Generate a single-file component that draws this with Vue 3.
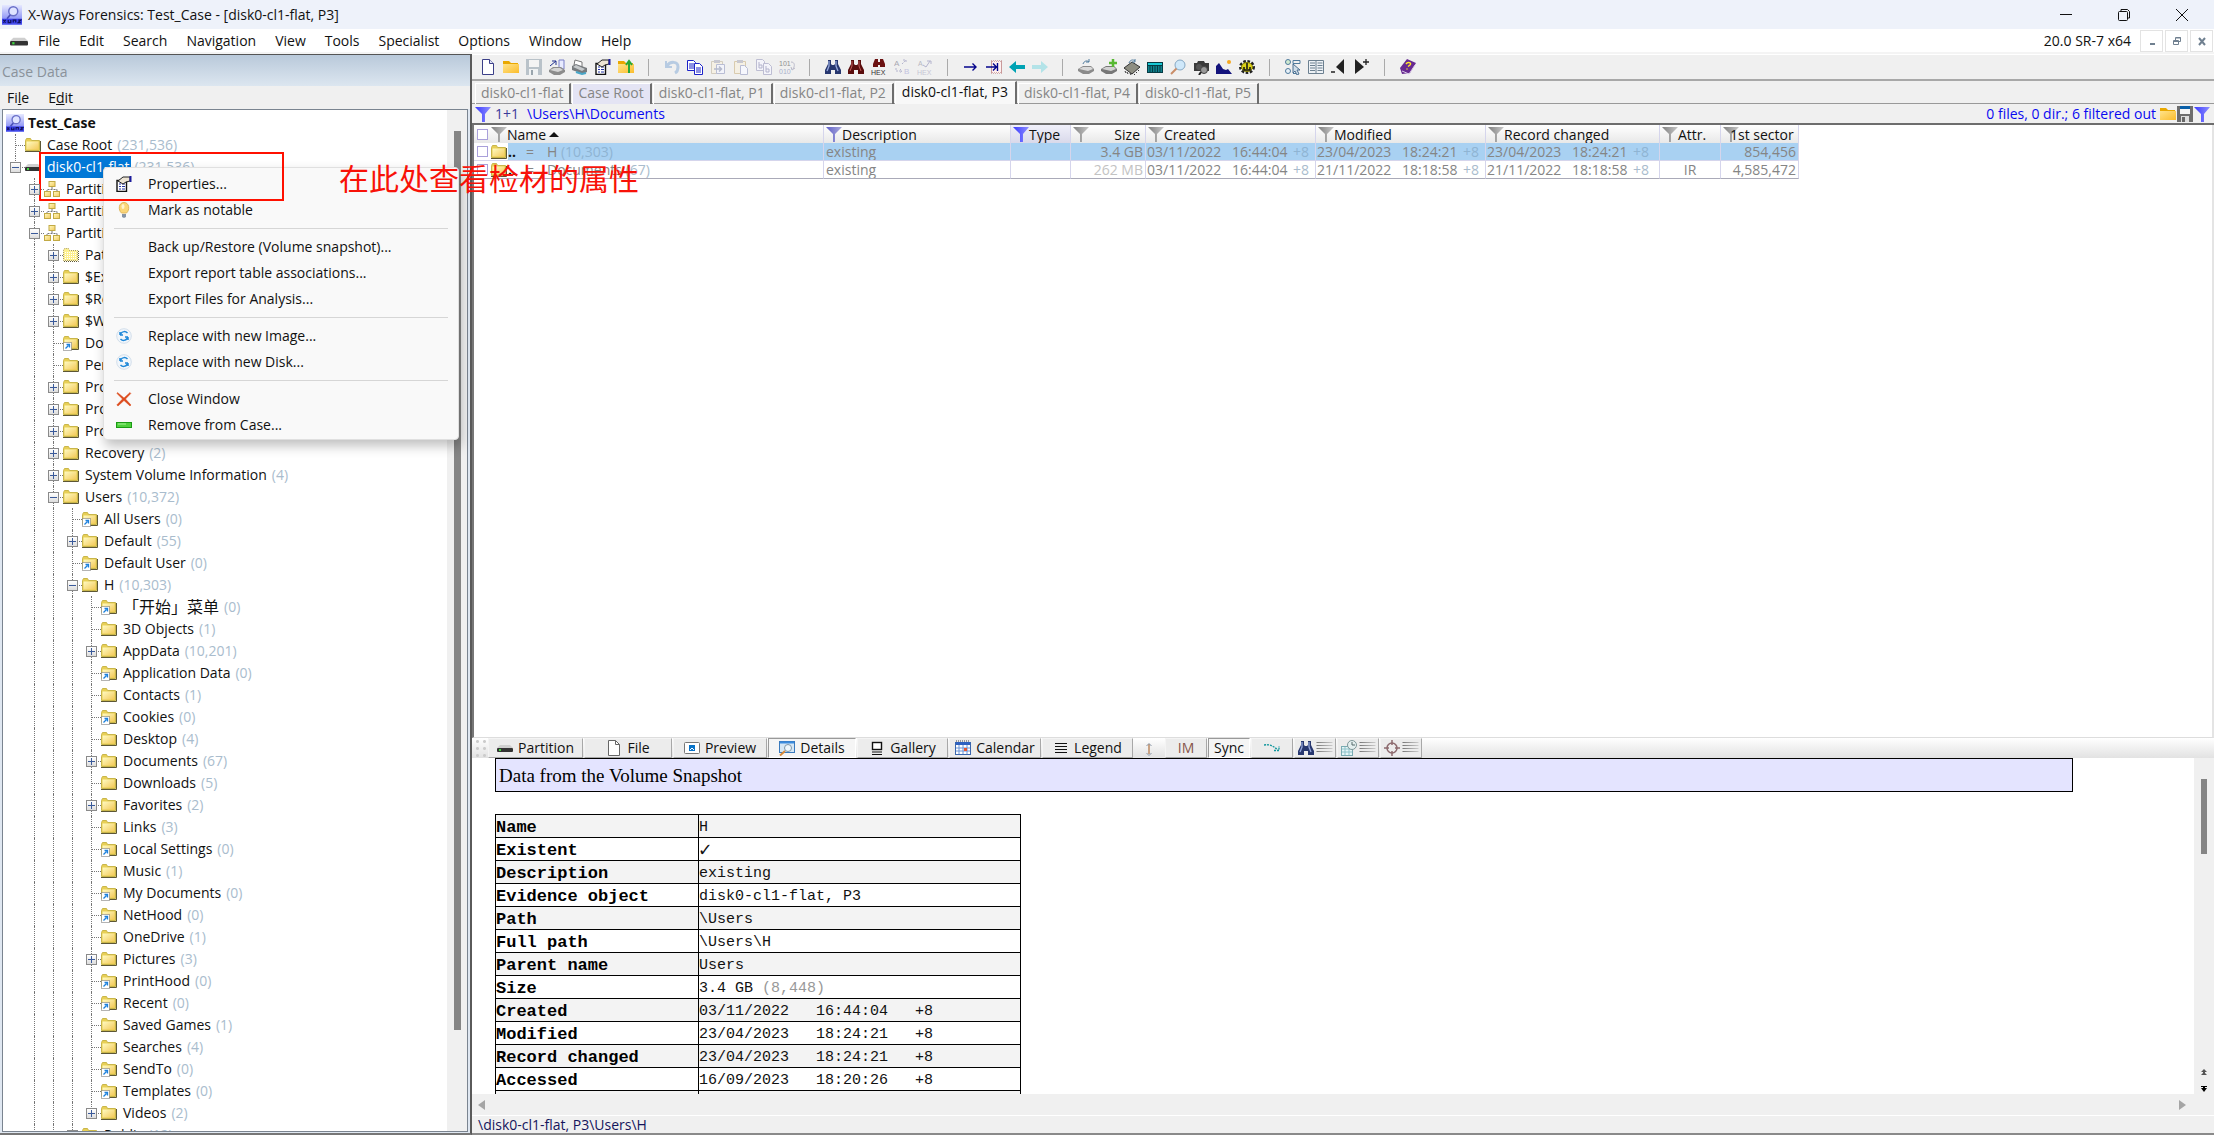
<script setup>
import { h, ref } from 'vue'

const icons = {
  app: '<rect width="16" height="16" fill="url(#gApp)"/><circle cx="9" cy="5" r="3.6" fill="#dfe3ff" stroke="#6a70c8" stroke-width="1.2"/><path d="M6.5 8L4 11" stroke="#4a50b8" stroke-width="1.4"/><rect y="11" width="16" height="4" fill="#3a40ea"/><path d="M1 12l2 2m0-2l-2 2M5 12v2h2v-2M9 14v-2h2v2M13 12h2l-2 2h2" stroke="#11125e" fill="none"/>',
  folder: '<path d="M.5 3.500l1-2h4l1 2h8v10H.5z" fill="#e8cf55" stroke="#c9b64a"/><path d="M1.500 4.500h12v8h-12z" fill="url(#gFold)"/><path d="M15.500 4v10.500H0" fill="none" stroke="#5d5735"/>',
  link: '<path d="M.5 3.500l1-2h4l1 2h8v10H.5z" fill="#e8cf55" stroke="#c9b64a"/><path d="M1.500 4.500h12v8h-12z" fill="url(#gFold)"/><path d="M15.500 4v10.500H8" fill="none" stroke="#5d5735"/><rect x="0.5" y="7.500" width="8" height="8" fill="#fff" stroke="#666" stroke-dasharray="1 1"/><path d="M2.500 13.500l3-3M3.500 9.500h3v3" stroke="#1c80dc" stroke-width="1.3" fill="none"/>',
  virtual: '<path d="M.5 3.500l1-2h4l1 2h8v10H.5z" fill="#fdf08e" stroke="#a99b55" stroke-dasharray="1 1"/><path d="M2 5.500h12M2 7.500h12M2 9.500h12M2 11.500h12" stroke="#fff" stroke-dasharray="1 1"/><path d="M15.500 4v10.500H0" fill="none" stroke="#5d5735" stroke-dasharray="1 1"/>',
  disk: '<path d="M3 5h10l3 3H0z" fill="#cfcfcf"/><rect y="8" width="16" height="4" rx="1" fill="#333"/><rect x="2" y="9" width="2" height="2" fill="#3fd63f"/>',
  part: '<path d="M8 6v3M3 11V8.500h10V11" stroke="#777" fill="none" stroke-dasharray="2 1"/><rect x="5" y=".5" width="6" height="5" fill="url(#gFold)" stroke="#c2aa45"/><rect x=".5" y="10.500" width="6" height="5" fill="url(#gFold)" stroke="#c2aa45"/><rect x="9.500" y="10.500" width="6" height="5" fill="url(#gFold)" stroke="#c2aa45"/>',
  new: '<path d="M2.500.5h7l4 4v11h-11z" fill="#fff" stroke="#3b3f88"/><path d="M9.500.5v4h4" fill="#dfe4f7" stroke="#3b3f88"/>',
  open: '<path d="M0 2h6l2 2h7v3H0z" fill="#e9a800"/><path d="M0 5h16v9H0z" fill="url(#gOpen)"/>',
  save: '<path d="M0 0h16v16H0z" fill="#b9c2c9"/><rect x="3" y="1" width="10" height="7" fill="#f4f4f4"/><rect x="3" y="10" width="9" height="6" fill="#f0f2f3"/><path d="M5 11h2v5H5z" fill="#9aa5ad"/>',
  floppy: '<path d="M0 0h16v16H0z" fill="#6d6d6d"/><rect x="3" y="0" width="10" height="3" fill="#0a5fa8"/><rect x="3" y="3" width="10" height="5" fill="#f4f4f4"/><rect x="4" y="10" width="8" height="6" fill="#ddd"/><path d="M5 11h3v5H5z" fill="#666"/>',
  scan: '<path d="M10 1h5v9h-5z" fill="#e8ebff" stroke="#7b80c8"/><path d="M1 7l6-5M3 2h4v4" stroke="#20308f" fill="none"/><path d="M0 11l4-3h8l4 3v2l-5 3H5l-5-3z" fill="#8c8c8c"/><path d="M1 11l4-2h6l3 2-5 2z" fill="#d5d5d5"/>',
  printer: '<path d="M3 1l7 2v5L2 6z" fill="#fff" stroke="#777"/><path d="M0 7l4-2 11 4v4l-4 2L0 11z" fill="#777b7e"/><path d="M1 8l3-2 9 4-3 2z" fill="#c6cacc"/><path d="M4 13l6 2 4-1" stroke="#49a7c9" stroke-width="2" fill="none"/>',
  props: '<path d="M1 4.500h9.500v11H1z" fill="#fff" stroke="#111" stroke-width="1.400"/><path d="M3 8h2m1 0h3M3 10.500h2m1 0h3M3 13h2m1 0h3" stroke="#2333a4"/><path d="M2 5l5-4h7v4l-4 1-3 2z" fill="#ece4d4" stroke="#222"/><path d="M13.500 0v6h2V0z" fill="#1c1c9c"/>',
  upfolder: '<path d="M0 2h6l2 2h7v3H0z" fill="#e9a800"/><path d="M0 5h16v9H0z" fill="url(#gOpen)"/><path d="M11 14V3M8 6l3-4 3 4" stroke="#27a838" stroke-width="2" fill="none"/>',
  undo: '<path d="M2 2v6h6" stroke="#b7cbe2" stroke-width="2" fill="none"/><path d="M3 7c3-5 11-5 11 1 0 3-1 5-3 6" stroke="#b7cbe2" stroke-width="3" fill="none"/>',
  copy: '<path d="M.5 1.500h6l2 2v8h-8z" fill="#fff" stroke="#1d22c9"/><path d="M2 5h5M2 7h5M2 9h5" stroke="#1d22c9"/><path d="M7.500 4.500h5l3 3v8h-8z" fill="#fff" stroke="#1d22c9"/><path d="M9 9h5M9 11h5M9 13h5" stroke="#1d22c9"/>',
  paste1: '<path d="M1.500 2.500h11v12h-11z" fill="#f5f0e4" stroke="#d3cdbf"/><path d="M4 1h6v3H4z" fill="#c8c8d0"/><path d="M6.500 5.500h8v9h-8z" fill="#f3f4fa" stroke="#b9bdd4"/><path d="M4 10h7M9 7.500l2.500 2.500L9 12.500" stroke="#b4b9cc" fill="none" stroke-width="1.500"/>',
  paste2: '<path d="M1.500 2.500h11v12h-11z" fill="#f5f0e4" stroke="#d9cbae"/><path d="M4 1h6v3H4z" fill="#c8c8d0"/><path d="M7.500 6.500h4l3 3v6h-7z" fill="#f6f7fd" stroke="#b9bdd4"/>',
  copyb: '<path d="M.5.5h6l2 2v9h-8z" fill="#f4f4fa" stroke="#bdbdd2"/><path d="M7.500 4.500h5l3 3v8h-8z" fill="#f4f4fa" stroke="#bdbdd2"/><path d="M3 3v6h3V6H3M10 7v6h3v-3h-3" stroke="#b3b3cc" fill="none"/>',
  bin: '<text x="0" y="7" font-size="7" font-family="Liberation Sans" fill="#8f8f8f">101</text><text x="0" y="15" font-size="7" font-family="Liberation Sans" fill="#aab0cc">010</text><path d="M12 3c4 0 4 4 2 7m-2-2l1 3 3-2" stroke="#b9b9c9" fill="none"/>',
  binoc: '<path d="M3 1h3v4l1 1h2l1-1V1h3v4l3 6v4h-6v-4H6v4H0v-4l3-6z" fill="#27376f"/><path d="M4 2v5l-2 5M11 2v5l2 5" stroke="#96a8dc" stroke-width="1.300" fill="none"/>',
  binocr: '<path d="M3 1h3v4l1 1h2l1-1V1h3v4l3 6v4h-6v-4H6v4H0v-4l3-6z" fill="#5a0c0c"/><path d="M4 2v5l-2 5M11 2v5l2 5" stroke="#c15a5a" fill="none"/>',
  binhex: '<path d="M4 0h3v3h2V0h3l2 5v3H9V6H7v2H2V5z" fill="#6c1212"/><text x="0" y="15.500" font-size="7" font-family="Liberation Sans" fill="#333">HEX</text>',
  ab: '<text x="0" y="7" font-size="8" font-family="Liberation Sans" fill="#a8a8b2">A</text><text x="10" y="15" font-size="8" font-family="Liberation Sans" fill="#c3c3e0">B</text><path d="M8 5l4-4M9 1h3v3M2 9v3h6m-2-2l2 2-2 2" stroke="#b4b4ce" fill="none" stroke-dasharray="2 1"/>',
  abhex: '<text x="1" y="7" font-size="7" font-family="Liberation Sans" fill="#b8b8c2">A</text><text x="0" y="15.500" font-size="7" font-family="Liberation Sans" fill="#c6c6d4">HEX</text><path d="M6 6l3 2 4-6m-3 0h4v3" stroke="#b4b4ce" fill="none"/>',
  goto: '<path d="M1 8h12M9.500 4.500L13 8l-3.500 3.500" stroke="#05058c" stroke-width="1.400" fill="none"/>',
  gotop: '<path d="M5.500 1.500l1 1 1-1 1 1 1-1 1 1 1-1 1 1 1-1 1 1 1-1v13l-1-1-1 1-1-1-1 1-1-1-1 1-1-1-1 1-1-1-1 1z" fill="#fff0f0" stroke="#c99a9a"/><path d="M0 8h10M7 4.500L10.500 8 7 11.500M11.500 4v8" stroke="#05058c" stroke-width="1.400" fill="none"/>',
  back: '<path d="M0 8l7-6v4h9v4H7v4z" fill="#00a3b4"/>',
  fwd: '<path d="M16 8L9 2v4H0v4h9v4z" fill="#b3e3e8"/>',
  drive: '<path d="M0 10l5-3h8l3 3v2l-5 3H5l-5-3z" fill="#8b8b8b"/><path d="M1 10l4-2h8l2 2-5 2z" fill="#d9d9d9"/><path d="M5 5c1-3 4-4 6-2M11 0v3H8" stroke="#4f7a9c" fill="none"/>',
  driveadd: '<path d="M0 10l5-3h8l3 3v2l-5 3H5l-5-3z" fill="#777"/><path d="M1 10l4-2h8l2 2-5 2z" fill="#d2d2d2"/><path d="M12 0v8M8 4h8" stroke="#57b832" stroke-width="2.500"/>',
  ram: '<path d="M0 9l8-6 8 5-8 7z" fill="#8e8e82" stroke="#333"/><path d="M1 12l1 2m1-1l1 2m2-1l1 2m3-1l1 1m1-3l1 1m1-3l1 1" stroke="#333"/><path d="M5 4c1-3 4-4 6-2M11 0v3H8" stroke="#4f7a9c" fill="none"/>',
  calc: '<path d="M0 3h16v11H0z" fill="#063b44"/><path d="M1 4h14v2H1z" fill="#18c8d4"/><path d="M1 8h14M1 10h14M1 12h14" stroke="#18c8d4" stroke-dasharray="1.500 1"/>',
  mag: '<circle cx="10" cy="6" r="5" fill="#cfe8fa" stroke="#86a8c4"/><path d="M6.500 9.500L1 15" stroke="#c98d68" stroke-width="2"/>',
  cam: '<path d="M1 4h3l1-2h6l1 2h4v8H1z" fill="#3b3b3b"/><circle cx="6" cy="8" r="3" fill="#555"/><circle cx="11" cy="11" r="3.500" fill="#999" stroke="#444"/><path d="M8 13l-2 3" stroke="#222" stroke-width="2"/>',
  pic: '<path d="M0 15V7l3-3 4 6 3 1 2-1 4 5z" fill="#13137c"/><circle cx="13" cy="3" r="2" fill="#f6a821"/>',
  gear: '<ellipse cx="8" cy="8" rx="6.500" ry="5.500" fill="none" stroke="#222" stroke-width="3" stroke-dasharray="2.500 1.500"/><ellipse cx="8" cy="8" rx="5.500" ry="4.500" fill="#ddd31a" stroke="#837c05"/><path d="M5 8v3h6V8M8 4v6" stroke="#111" stroke-width="1.500" fill="none"/>',
  opts: '<circle cx="3" cy="3" r="2.500" fill="#cfead0" stroke="#4f7a9c"/><circle cx="3" cy="12" r="2.500" fill="#e8f1f8" stroke="#4f7a9c"/><path d="M8 1.500h7v3H8zM8 14.500h3" fill="none" stroke="#4f7a9c"/><path d="M8 5l7 6h-3l2 4-2 1-2-4-2 2z" fill="#cfdde8" stroke="#4b6f90"/>',
  cols: '<path d="M.5 1.500h15v13H.5z" fill="#eef2f6" stroke="#6c8090"/><path d="M8 2v12M2 4h5M2 6.500h5M2 9h5M2 11.500h5M9.500 4h5M9.500 6.500h5M9.500 9h5M9.500 11.500h5" stroke="#6c8090"/>',
  prev: '<path d="M13 0v15L5 8z" fill="#222"/><path d="M0 13h4" stroke="#222" stroke-width="1.500"/>',
  next: '<path d="M1 0v15l9-7z" fill="#222"/><path d="M9 3h6M12 0v6" stroke="#222" stroke-width="1.300"/>',
  book: '<path d="M0 9L7 0l9 4-6 10-8 1z" fill="#672a91"/><path d="M2 12l7 3 6-9" stroke="#d9c8e6" fill="none"/><path d="M6 5c2-3 6-1 4 1L8 7.500M7 9.500v1" stroke="#ffe928" stroke-width="1.500" fill="none"/>',
  filter: '<path d="M0 1h16L10 8v8H7V8z" fill="url(#gBlue)"/>',
  filterg: '<path d="M0 1h16L9 8v8H7V8z" fill="url(#gGray)"/>',
  filterb: '<path d="M0 1h16L9 8v8H7V8z" fill="url(#gSlate)"/>',
  bulb: '<path d="M5.500 11C2 8 2.500.5 8 .5s6 7.500 2.500 10.500z" fill="#fbd678" stroke="#e0b75c"/><ellipse cx="7" cy="4.500" rx="1.500" ry="2.500" fill="#fff3cf"/><path d="M6 12h4v3l-2 1-2-1z" fill="#8694a6"/>',
  replace: '<circle cx="8" cy="8" r="7.300" fill="#f1f6fb" stroke="#d3dfeb"/><path d="M4 7V4m0 3h3M4.500 6c2-3 5-3 7-1M12 9v3m0-3H9m2.500 1c-2 3-5 3-7 1" stroke="#1d87d8" stroke-width="1.500" fill="none"/>',
  close: '<path d="M1.500 1.500L8 7l6-5.500.8 1L9.500 8l5.500 6-1 1-6-5.500L2 15l-1.200-1L6.500 8 1 2.500z" fill="#dc4a1c" stroke="#dc4a1c" stroke-width=".5"/>',
  remove: '<rect x=".5" y="5.500" width="15" height="5" fill="#4fd13c" stroke="#1a9a14"/><path d="M2 7h8" stroke="#a8f29a"/>',
  page: '<path d="M2.500.5h7l4 4v11h-11z" fill="#fff" stroke="#666"/><path d="M9.500.5v4h4" fill="none" stroke="#666"/>',
  preview: '<rect x=".5" y="2.500" width="15" height="11" rx="1" fill="#fff" stroke="#777"/><rect x="5" y="5" width="6" height="6" fill="#0873c9"/><path d="M6 10l2-2 2 2" stroke="#fff" fill="none"/>',
  details: '<rect x=".5" y="1.500" width="15" height="11" fill="#d5e7f5" stroke="#3a7abd"/><path d="M1 2.500h14" stroke="#3a8bdc" stroke-width="2"/><circle cx="9" cy="8" r="3.500" fill="#eef7fc" stroke="#7f96a7"/><path d="M6 11l-5 4.500" stroke="#d88a3a" stroke-width="2"/>',
  gallery: '<rect x="3.500" y="2.500" width="9" height="7" fill="#fff" stroke="#111" stroke-width="1.400"/><path d="M3 12h10M3 14.500h10" stroke="#111"/>',
  calendar: '<rect x=".5" y="2.500" width="15" height="12" fill="#fff" stroke="#3a66ad"/><path d="M1 3.500h14" stroke="#2f62c0" stroke-width="3"/><path d="M1 8h14M1 11h14M4 5v9M8 5v9M12 5v9" stroke="#6a94d6"/><rect x="9" y="8" width="3" height="3" fill="#e5542f"/><path d="M1 1h14" stroke="#444" stroke-dasharray="1 1"/>',
  legend: '<path d="M2 3.500h12M2 6.500h12M2 9.500h12M2 12.500h12" stroke="#111"/>',
  updown: '<path d="M8 4v10" stroke="#c9a283" stroke-width="2"/><path d="M5.500 6L8 3.500 10.500 6M5.500 13L8 15.500l2.500-2.500" stroke="#8a96a6" fill="none"/>',
  jump: '<path d="M0 5c6-1 9 1 14 5M10 10.500h5V6" stroke="#12979d" stroke-width="1.300" fill="none" stroke-dasharray="2 1"/>',
  lines: '<path d="M0 2.500h16M0 5.500h16M0 8.500h16M0 11.500h16" stroke="url(#gLine)"/>',
  calclock: '<rect x=".5" y="6.500" width="11" height="9" fill="#e5f5f7" stroke="#7aabb2"/><path d="M1 9h10M1 12h10M4 7v8M8 7v8" stroke="#8fc3ca"/><circle cx="11" cy="5" r="4.500" fill="#e4efef" stroke="#7e9698"/><path d="M11 2v3h3" stroke="#55696b" fill="none"/>',
  target: '<circle cx="8" cy="8" r="5" fill="none" stroke="#8c6a6e" stroke-width="1.500"/><path d="M8 0v5M8 11v5M0 8h5M11 8h5" stroke="#8c6a6e" stroke-width="1.500"/>'
}
const Icon = (p) => h('svg', { class: 'ico', viewBox: '0 0 16 16', 'aria-hidden': 'true', innerHTML: icons[p.name] })
Icon.props = ['name']

const menus = ['File', 'Edit', 'Search', 'Navigation', 'View', 'Tools', 'Specialist', 'Options', 'Window', 'Help']
const toolbar = [
  'new', 'open', 'save', 'scan', 'printer', 'props', 'upfolder', '|', 'undo', 'copy', 'paste1', 'paste2', 'copyb', 'bin', '|',
  'binoc', 'binocr', 'binhex', 'ab', 'abhex', '|', 'goto', 'gotop', 'back', 'fwd', '|', 'drive', 'driveadd', 'ram', 'calc',
  'mag', 'cam', 'pic', 'gear', '|', 'opts', 'cols', 'prev', 'next', '|', 'book'
]
const tabs = ['disk0-cl1-flat', 'Case Root', 'disk0-cl1-flat, P1', 'disk0-cl1-flat, P2', 'disk0-cl1-flat, P3', 'disk0-cl1-flat, P4', 'disk0-cl1-flat, P5']
const activeTab = ref(4)

// [level, expander, icon, label, count]
const tree = [
  [0, '', 'folder', 'Case Root', '231,536'],
  [0, '-', 'disk', 'disk0-cl1-flat', '231,536'],
  [1, '+', 'part', 'Partition 1', ''],
  [1, '+', 'part', 'Partition 2', ''],
  [1, '-', 'part', 'Partition 3', ''],
  [2, '+', 'virtual', 'Path unknown', ''],
  [2, '+', 'folder', '$Extend', ''],
  [2, '+', 'folder', '$Recycle.Bin', ''],
  [2, '+', 'folder', '$WinREAgent', ''],
  [2, '', 'link', 'Documents and Settings', ''],
  [2, '', 'folder', 'PerfLogs', ''],
  [2, '+', 'folder', 'Program Files', ''],
  [2, '+', 'folder', 'Program Files (x86)', ''],
  [2, '+', 'folder', 'ProgramData', ''],
  [2, '+', 'folder', 'Recovery', '2'],
  [2, '+', 'folder', 'System Volume Information', '4'],
  [2, '-', 'folder', 'Users', '10,372'],
  [3, '', 'link', 'All Users', '0'],
  [3, '+', 'folder', 'Default', '55'],
  [3, '', 'link', 'Default User', '0'],
  [3, '-', 'folder', 'H', '10,303'],
  [4, '', 'link', '「开始」菜单', '0'],
  [4, '', 'folder', '3D Objects', '1'],
  [4, '+', 'folder', 'AppData', '10,201'],
  [4, '', 'link', 'Application Data', '0'],
  [4, '', 'folder', 'Contacts', '1'],
  [4, '', 'link', 'Cookies', '0'],
  [4, '', 'folder', 'Desktop', '4'],
  [4, '+', 'folder', 'Documents', '67'],
  [4, '', 'folder', 'Downloads', '5'],
  [4, '+', 'folder', 'Favorites', '2'],
  [4, '', 'folder', 'Links', '3'],
  [4, '', 'link', 'Local Settings', '0'],
  [4, '', 'folder', 'Music', '1'],
  [4, '', 'link', 'My Documents', '0'],
  [4, '', 'link', 'NetHood', '0'],
  [4, '', 'folder', 'OneDrive', '1'],
  [4, '+', 'folder', 'Pictures', '3'],
  [4, '', 'link', 'PrintHood', '0'],
  [4, '', 'link', 'Recent', '0'],
  [4, '', 'folder', 'Saved Games', '1'],
  [4, '', 'folder', 'Searches', '4'],
  [4, '', 'link', 'SendTo', '0'],
  [4, '', 'link', 'Templates', '0'],
  [4, '+', 'folder', 'Videos', '2'],
  [3, '+', 'folder', 'Public', '12']
].map(([level, exp, icon, label, count], i, all) => ({
  level, exp, icon, label, count, last: i > 0 && (!all[i + 1] || all[i + 1][0] < level || label === 'disk0-cl1-flat')
}))
const selected = ref('disk0-cl1-flat')

const context = [
  [['props', 'Properties...'], ['bulb', 'Mark as notable']],
  [['', 'Back up/Restore (Volume snapshot)...'], ['', 'Export report table associations...'], ['', 'Export Files for Analysis...']],
  [['replace', 'Replace with new Image...'], ['replace', 'Replace with new Disk...']],
  [['close', 'Close Window'], ['remove', 'Remove from Case...']]
]

const files = [
  { name: 'H', count: '10,303', size: '3.4 GB', dates: [['03/11/2022', '16:44:04'], ['23/04/2023', '18:24:21'], ['23/04/2023', '18:24:21']], attr: '', sector: '854,456' },
  { name: 'Documents', count: '67', size: '262 MB', dates: [['03/11/2022', '16:44:04'], ['21/11/2022', '18:18:58'], ['21/11/2022', '18:18:58']], attr: 'IR', sector: '4,585,472' }
]

const views = [
  ['disk', 'Partition', 95], ['page', 'File', 88], ['preview', 'Preview', 94], ['details', 'Details', 88],
  ['gallery', 'Gallery', 91], ['calendar', 'Calendar', 92], ['legend', 'Legend', 91]
]
const details = [
  ['Name', 'H'], ['Existent', '✓'], ['Description', 'existing'], ['Evidence object', 'disk0-cl1-flat, P3'], ['Path', '\\Users'],
  ['Full path', '\\Users\\H'], ['Parent name', 'Users'], ['Size', '3.4 GB ', '(8,448)'], ['Created', '03/11/2022   16:44:04   +8'],
  ['Modified', '23/04/2023   18:24:21   +8'], ['Record changed', '23/04/2023   18:24:21   +8'], ['Accessed', '16/09/2023   18:20:26   +8'], ['', '']
]
</script>

<template>
  <div class="window">
    <svg class="defs" aria-hidden="true">
      <defs>
        <linearGradient id="gApp" x2="0" y2="1"><stop stop-color="#e6e9ff" /><stop offset="1" stop-color="#6a72f2" /></linearGradient>
        <linearGradient id="gFold" x2="1" y2="1"><stop stop-color="#fffbc2" /><stop offset="1" stop-color="#f3c95a" /></linearGradient>
        <linearGradient id="gOpen" x2="1" y2="1"><stop stop-color="#ffe38a" /><stop offset="1" stop-color="#fbbd2c" /></linearGradient>
        <linearGradient id="gBlue"><stop stop-color="#3a3aff" /><stop offset="1" stop-color="#8f8fff" /></linearGradient>
        <linearGradient id="gGray"><stop stop-color="#808080" /><stop offset="1" stop-color="#c8c8c8" /></linearGradient>
        <linearGradient id="gSlate"><stop stop-color="#6060c8" /><stop offset="1" stop-color="#a9a9dc" /></linearGradient>
        <linearGradient id="gLine" gradientUnits="userSpaceOnUse" x2="16"><stop stop-color="#777" /><stop offset="1" stop-color="#ccc" /></linearGradient>
      </defs>
    </svg>

    <header class="titlebar">
      <Icon name="app" />
      <span class="title">X-Ways Forensics: Test_Case - [disk0-cl1-flat, P3]</span>
      <div class="winbtns">
        <button aria-label="Minimize"><svg width="14" height="14"><path d="M1 6.500h12" stroke="#111" /></svg></button>
        <button aria-label="Restore"><svg width="14" height="14"><path d="M4 3V1.500h6.500l2 2V10H11" fill="none" stroke="#111" /><rect x="1.500" y="3.500" width="9" height="9" rx="1" fill="none" stroke="#111" /></svg></button>
        <button aria-label="Close"><svg width="14" height="14"><path d="M1 1l12 12M13 1L1 13" stroke="#111" /></svg></button>
      </div>
    </header>

    <nav class="menubar">
      <Icon name="disk" />
      <button v-for="m in menus" :key="m">{{ m }}</button>
      <span class="version">20.0 SR-7 x64</span>
      <button class="mdi" aria-label="Minimize document"><svg width="12" height="12"><path d="M4 9h5" stroke="#708090" stroke-width="2" /></svg></button>
      <button class="mdi" aria-label="Restore document"><svg width="12" height="12"><path d="M4.500 5V2.500h5v4H8M2.500 5.500h5v4h-5zM3 6.500h4M5 3h5" fill="none" stroke="#708090" /></svg></button>
      <button class="mdi" aria-label="Close document"><svg width="12" height="12"><path d="M3 3l6 7M9 3l-6 7" stroke="#708090" stroke-width="2" /></svg></button>
    </nav>

    <div class="body">
      <aside class="case">
        <h2>Case Data</h2>
        <div class="casemenu"><button>Fi<u>l</u>e</button><button>E<u>d</u>it</button></div>
        <div class="treebox">
          <div class="tree">
            <div class="row root"><Icon name="app" /><b>Test_Case</b></div>
            <div v-for="(n, i) in tree" :key="i" class="row">
              <span v-for="k in n.level" :key="k" class="cell" :class="{ line: k > 1 }"></span>
              <span class="cell line branch" :class="{ last: n.last && n.label !== 'Public' }">
                <button v-if="n.exp" class="exp" :class="{ plus: n.exp === '+' }" :aria-label="'Toggle ' + n.label"></button>
              </span>
              <Icon :name="n.icon" />
              <span class="label" :class="{ sel: n.level === 0 && n.label === selected, han: n.label[0] === '「' }">{{ n.label }}</span>
              <span v-if="n.count" class="count">({{ n.count }})</span>
            </div>
          </div>
          <div class="vtrack"><div class="vthumb"></div></div>
        </div>
      </aside>

      <main class="main">
        <div class="toolbar">
          <template v-for="(t, i) in toolbar" :key="i">
            <span v-if="t === '|'" class="sep"></span>
            <button v-else :aria-label="t"><Icon :name="t" /></button>
          </template>
        </div>
        <div class="tabs">
          <button v-for="(t, i) in tabs" :key="t" :class="{ active: i === activeTab, root: i === 1 }" @click="activeTab = i">{{ t }}</button>
        </div>
        <div class="pathbar">
          <Icon name="filter" /><span class="depth">1+1</span><a href="#">\Users\H\Documents</a>
          <span class="stat">0 files, 0 dir.; 6 filtered out</span>
          <Icon name="open" /><Icon name="floppy" /><Icon name="filter" />
        </div>

        <section class="listing">
          <table class="files">
            <colgroup><col class="c-name"><col class="c-desc"><col class="c-type"><col class="c-size"><col class="c-date"><col class="c-date"><col class="c-rec"><col class="c-attr"><col class="c-sec"></colgroup>
            <thead>
              <tr>
                <th><div class="hd"><input type="checkbox" aria-label="Select all"><Icon name="filterg" />Name<i class="asc"></i></div></th>
                <th><div class="hd"><Icon name="filterb" />Description</div></th>
                <th class="typ"><div class="hd"><Icon name="filter" />Type</div></th>
                <th><div class="hd push"><Icon name="filterg" /><span>Size</span></div></th>
                <th><div class="hd"><Icon name="filterg" />Created</div></th>
                <th><div class="hd"><Icon name="filterg" />Modified</div></th>
                <th><div class="hd"><Icon name="filterg" />Record changed</div></th>
                <th><div class="hd"><Icon name="filterg" />Attr.</div></th>
                <th><div class="hd tight"><Icon name="filterg" /><span>1st sector</span></div></th>
              </tr>
            </thead>
            <tbody>
              <tr v-for="(f, i) in files" :key="f.name" :class="{ on: i === 0 }">
                <td><div class="nm"><span class="marks"><input type="checkbox" :aria-label="'Select ' + f.name"><Icon name="folder" /></span><b>..</b><span class="eq">=</span><span>{{ f.name }} <em>({{ f.count }})</em></span></div></td>
                <td class="pad">existing</td>
                <td></td>
                <td class="num" :class="{ pale: i === 1 }">{{ f.size }}</td>
                <td v-for="(d, k) in f.dates" :key="k"><div class="dt"><span class="d">{{ d[0] }}</span><span class="t">{{ d[1] }}</span><em>+8</em></div></td>
                <td class="mid">{{ f.attr }}</td>
                <td class="num">{{ f.sector }}</td>
              </tr>
            </tbody>
          </table>
        </section>

        <div class="viewbar">
          <span class="grip"></span>
          <button v-for="v in views" :key="v[1]" :class="{ down: v[1] === 'Details' }" :style="{ width: v[2] + 'px' }"><Icon :name="v[0]" />{{ v[1] }}</button>
          <span class="updown"><Icon name="updown" /></span>
          <button class="small im">IM</button>
          <button class="small down">Sync</button>
          <button class="small" aria-label="Jump"><Icon name="jump" /></button>
          <button class="small" aria-label="Search hits"><Icon name="binoc" /><Icon name="lines" /></button>
          <button class="small" aria-label="Events"><Icon name="calclock" /><Icon name="lines" /></button>
          <button class="small" aria-label="Positions"><Icon name="target" /><Icon name="lines" /></button>
        </div>

        <section class="details">
          <div class="doc">
            <h1>Data from the Volume Snapshot</h1>
            <table class="props">
              <tbody>
                <tr v-for="(d, i) in details" :key="i"><th>{{ d[0] }}</th><td :class="{ tick: d[1] === '✓' }">{{ d[1] }}<span v-if="d[2]">{{ d[2] }}</span></td></tr>
              </tbody>
            </table>
          </div>
          <div class="dtrack">
            <div class="dthumb"></div>
            <svg width="8" height="24" viewBox="0 0 8 24"><path d="M4 0L1 3h2v1L1 6h6L5 4V3h2z" fill="#555" /><path d="M1 17h6v1H5v1h2l-3 4-3-4h2v-1H1z" fill="#000" /></svg>
          </div>
        </section>
        <div class="htrack"><i class="lt"></i><i class="rt"></i></div>
        <footer class="status">\disk0-cl1-flat, P3\Users\H</footer>
      </main>
    </div>

    <div class="context" role="menu">
      <div v-for="(g, i) in context" :key="i" class="group">
        <button v-for="c in g" :key="c[1]" role="menuitem"><span class="slot"><Icon v-if="c[0]" :name="c[0]" /></span>{{ c[1] }}</button>
      </div>
    </div>
    <div class="frame"></div>
    <p class="note">在此处查看检材的属性</p>
  </div>
</template>

<style>
body { margin: 0; }
</style>

<style scoped>
* { box-sizing: border-box; }
.window {
  position: relative; display: flex; flex-direction: column; height: 100vh; overflow: hidden; background: #f0f0f0;
  font: 14px/20px "Open Sans", "Noto Sans CJK SC", sans-serif; color: #111;
}
button { font: inherit; color: inherit; background: none; border: 0; padding: 0; margin: 0; }
button, .label, .count, th, td { white-space: nowrap; }
.defs { position: absolute; width: 0; height: 0; }
.ico { width: 16px; height: 16px; flex: none; display: block; }

.titlebar { display: flex; align-items: center; height: 29px; flex: none; background: #eef2fa; padding-left: 2px; }
.titlebar .ico { width: 20px; height: 20px; }
.title { margin-left: 6px; }
.winbtns { margin-left: auto; margin-right: 3px; display: flex; }
.winbtns button { width: 58px; height: 29px; display: flex; align-items: center; justify-content: center; }

.menubar { display: flex; align-items: center; height: 25px; flex: none; gap: 1px; background: #fff; padding-left: 10px; border-bottom: 2px solid #f4f4f4; }
.menubar .ico { width: 18px; height: 18px; }
.menubar button { padding: 0 9px; }
.version { margin-left: auto; margin-right: 8px; }
.menubar .mdi { width: 23px; height: 22px; padding: 0; margin-right: 1px; border: 1px solid #e3e3e3; display: flex; align-items: center; justify-content: center; }

.body { display: flex; flex: 1; min-height: 0; }
.case { width: 472px; flex: none; display: flex; flex-direction: column; border-top: 1px solid #555; border-right: 2px solid #5a5a5a; border-bottom: 2px solid #777; background: #dfe7f1; }
.case h2 { margin: 0; height: 31px; padding: 7px 2px 0; font-size: 14px; font-weight: 400; color: #8a929a; background: linear-gradient(#b9c9da, #dce6f0); }
.casemenu { height: 23px; flex: none; display: flex; gap: 19px; padding: 1px 7px 0; background: #f0f0f0; }
.treebox { flex: 1; min-height: 0; display: flex; margin: 0 2px 1px 2px; border: 1px solid #7a8490; background: #fff; }
.tree { flex: 1; overflow: hidden; padding: 2px 0 0 3px; }
.row { display: flex; align-items: center; height: 22px; }
.row .ico { margin-right: 4px; }
.row.root .ico { width: 18px; height: 18px; }
.cell { position: relative; flex: none; width: 19px; height: 22px; }
.line::before { content: ''; position: absolute; left: 9px; top: 0; bottom: 0; border-left: 1px dotted #777; }
.last::before { bottom: 11px; }
.branch::after { content: ''; position: absolute; left: 10px; right: 0; top: 11px; border-top: 1px dotted #777; }
.exp { position: absolute; z-index: 1; left: 4px; top: 6px; width: 11px; height: 11px; border: 1px solid #8a8a8a; background: linear-gradient(#3a5a9a, #3a5a9a) center / 7px 1px no-repeat, linear-gradient(#fff, #ddd); }
.exp.plus { background: linear-gradient(#3a5a9a, #3a5a9a) center / 7px 1px no-repeat, linear-gradient(#3a5a9a, #3a5a9a) center / 1px 7px no-repeat, linear-gradient(#fff, #ddd); }
.label { padding: 0 2px; line-height: 22px; }
.han { font-size: 16px; }
.sel { background: #0078d7; color: #fff; }
.count { color: #a9bccd; padding-left: 3px; }
.vtrack { width: 20px; flex: none; background: #f0f0f0; padding: 21px 6px 101px 7px; display: flex; }
.vthumb { flex: 1; background: #858585; }

.main { flex: 1; min-width: 0; display: flex; flex-direction: column; border-top: 1px solid #fff; }
.toolbar { display: flex; align-items: center; height: 26px; flex: none; padding-left: 4px; border-bottom: 2px solid #a8a8a8; }
.toolbar button { width: 23px; display: flex; justify-content: center; }
.sep { width: 23px; height: 17px; background: linear-gradient(#aaa, #aaa) center / 1px 17px no-repeat; }
.tabs { display: flex; height: 23px; flex: none; padding: 2px 3px 0; gap: 1px; border-bottom: 1px solid #999; }
.tabs button { height: 21px; padding: 0 6px 2px 5px; line-height: 18px; color: #858585; border: 1px solid #fff; border-right: 2px solid #6d6d6d; border-bottom: 0; }
.tabs .root { background: #e4e4f4; }
.tabs .active { height: 23px; margin-top: -2px; padding: 0 7px 2px 6px; background: #f8f8f8; color: #111; }
.pathbar { display: flex; align-items: center; height: 21px; flex: none; padding: 0 3px; color: #0a0af0; border-bottom: 2px solid #6d6d6d; }
.pathbar a { color: #0a0af0; text-decoration: none; margin-left: 8px; }
.pathbar .ico { margin-right: 1px; }
.depth { color: #3a3a9a; margin-left: 3px; }
.stat { margin-left: auto; margin-right: 4px; }

.listing { flex: 1; min-height: 0; overflow: hidden; background: #fff; border-left: 2px solid #777; border-right: 2px solid #e4e4e4; border-bottom: 1px solid #ddd; }
.files { width: 1325px; table-layout: fixed; border-collapse: separate; border-spacing: 0; }
.files th, .files td { height: 18px; padding: 0; font-weight: 400; line-height: 17px; border-right: 1px solid #d5d5ec; overflow: hidden; }
.files th { background: linear-gradient(#fff, #e8e8e8); }
.files .typ { background: linear-gradient(#f0f0fa, #d9d9ea); }
.files td { color: #858585; border-bottom: 1px solid #d5d5ec; }
.files tr:last-child td { border-bottom-color: #aaaab8; }
.c-name { width: 350px; } .c-desc { width: 187px; } .c-type { width: 60px; } .c-size { width: 75px; }
.c-date { width: 170px; } .c-rec { width: 174px; } .c-attr { width: 61px; } .c-sec { width: 78px; }
.hd { display: flex; align-items: center; padding-left: 2px; }
.push { justify-content: space-between; padding-right: 5px; }
.tight { padding-right: 3px; } .tight span { margin-left: -9px; }
.files input { appearance: none; width: 11px; height: 11px; margin: 0 3px 0 1px; border: 1px solid #a9a0da; background: #fff; flex: none; }
.asc { border: 5px solid transparent; border-top: 0; border-bottom-color: #111; margin-left: 3px; }
.on td { background: #a9d1f2; }
.nm { display: flex; align-items: center; }
.marks { display: flex; align-items: center; background: #fff; height: 17px; padding-left: 2px; }
.marks .ico { margin-right: 1px; }
.nm b { width: 18px; color: #111; }
.eq { width: 21px; }
em { font-style: normal; color: #a9bccd; }
.on em { color: #8fb4d3; }
.files .pad { padding-left: 2px; }
.files .num { text-align: right; padding-right: 2px; }
.files .pale { color: #c3c3c3; }
.mid { text-align: center; }
.dt { display: flex; padding-left: 1px; }
.d { width: 85px; } .t { width: 61px; }

.viewbar { display: flex; height: 20px; flex: none; gap: 1px; background: linear-gradient(#fff, #e2e2e2); }
.grip { width: 15px; background: radial-gradient(circle, #ccc 1px, transparent 2px) 2px 0 / 7px 7px; }
.viewbar button { display: flex; align-items: center; justify-content: center; gap: 5px; height: 20px; border: 1px solid #f4f4f4; border-right-color: #a8a8a8; border-bottom-color: #a8a8a8; background: #ececec; }
.viewbar .down { border-color: #999 #fff #fff #999; background: #f5f5f5; }
.viewbar .small { width: 42px; gap: 2px; }
.viewbar .small .ico + .ico { width: 17px; }
.viewbar .im { color: #86544a; }
.updown { width: 30px; display: flex; align-items: center; justify-content: center; }

.details { display: flex; height: 336px; flex: none; background: #fff; overflow: hidden; }
.doc { flex: 1; padding: 0 121px 0 23px; }
.doc h1 { margin: 0 0 22px; height: 34px; padding: 0 3px; font: 19px/34px "Liberation Serif", serif; color: #000; background: #e4e4ff; border: 1px solid #000; }
.props { width: 526px; table-layout: fixed; border-collapse: collapse; font: 15px/18px "Liberation Mono", monospace; color: #111; }
.props th, .props td { height: 23px; padding: 4px 0 0; border: 1px solid #000; text-align: left; white-space: pre; }
.props th { width: 203px; font-size: 17px; color: #000; }
.props .tick { font-size: 20px; }
.props tr:nth-child(odd) { background: #f3f3f3; }
.props span { color: #999; }
.dtrack { width: 20px; flex: none; background: #f0f0f0; display: flex; flex-direction: column; align-items: center; justify-content: space-between; padding: 21px 0 1px; }
.dthumb { width: 6px; height: 75px; background: #858585; }
.htrack { height: 21px; flex: none; display: flex; align-items: center; justify-content: space-between; padding: 0 28px 0 6px; background: #f0f0f0; }
.lt, .rt { border: 5px solid transparent; }
.lt { border-left: 0; border-right: 7px solid #a5a5a5; } .rt { border-right: 0; border-left: 7px solid #a5a5a5; }
.status { height: 20px; flex: none; padding: 0 6px; line-height: 18px; color: #15155c; border-top: 1px solid #fff; border-bottom: 2px solid #8a8a8a; }

.context { position: absolute; left: 103px; top: 167px; width: 356px; padding: 3px 10px 1px; background: #f9f9f9; border: 1px solid #e0e0e0; border-radius: 4px; box-shadow: 2px 6px 12px rgba(0, 0, 0, .25); }
.group + .group { border-top: 1px solid #d6d6d6; margin-top: 5px; padding-top: 5px; }
.group button { display: flex; align-items: center; width: 100%; height: 26px; }
.slot { width: 34px; padding-left: 2px; }
.frame { position: absolute; left: 39px; top: 152px; width: 245px; height: 49px; border: 2px solid #ff1000; }
.note { position: absolute; left: 339px; top: 157px; margin: 0; font: 30px/40px "Noto Sans CJK SC", sans-serif; color: #f81208; }
</style>
